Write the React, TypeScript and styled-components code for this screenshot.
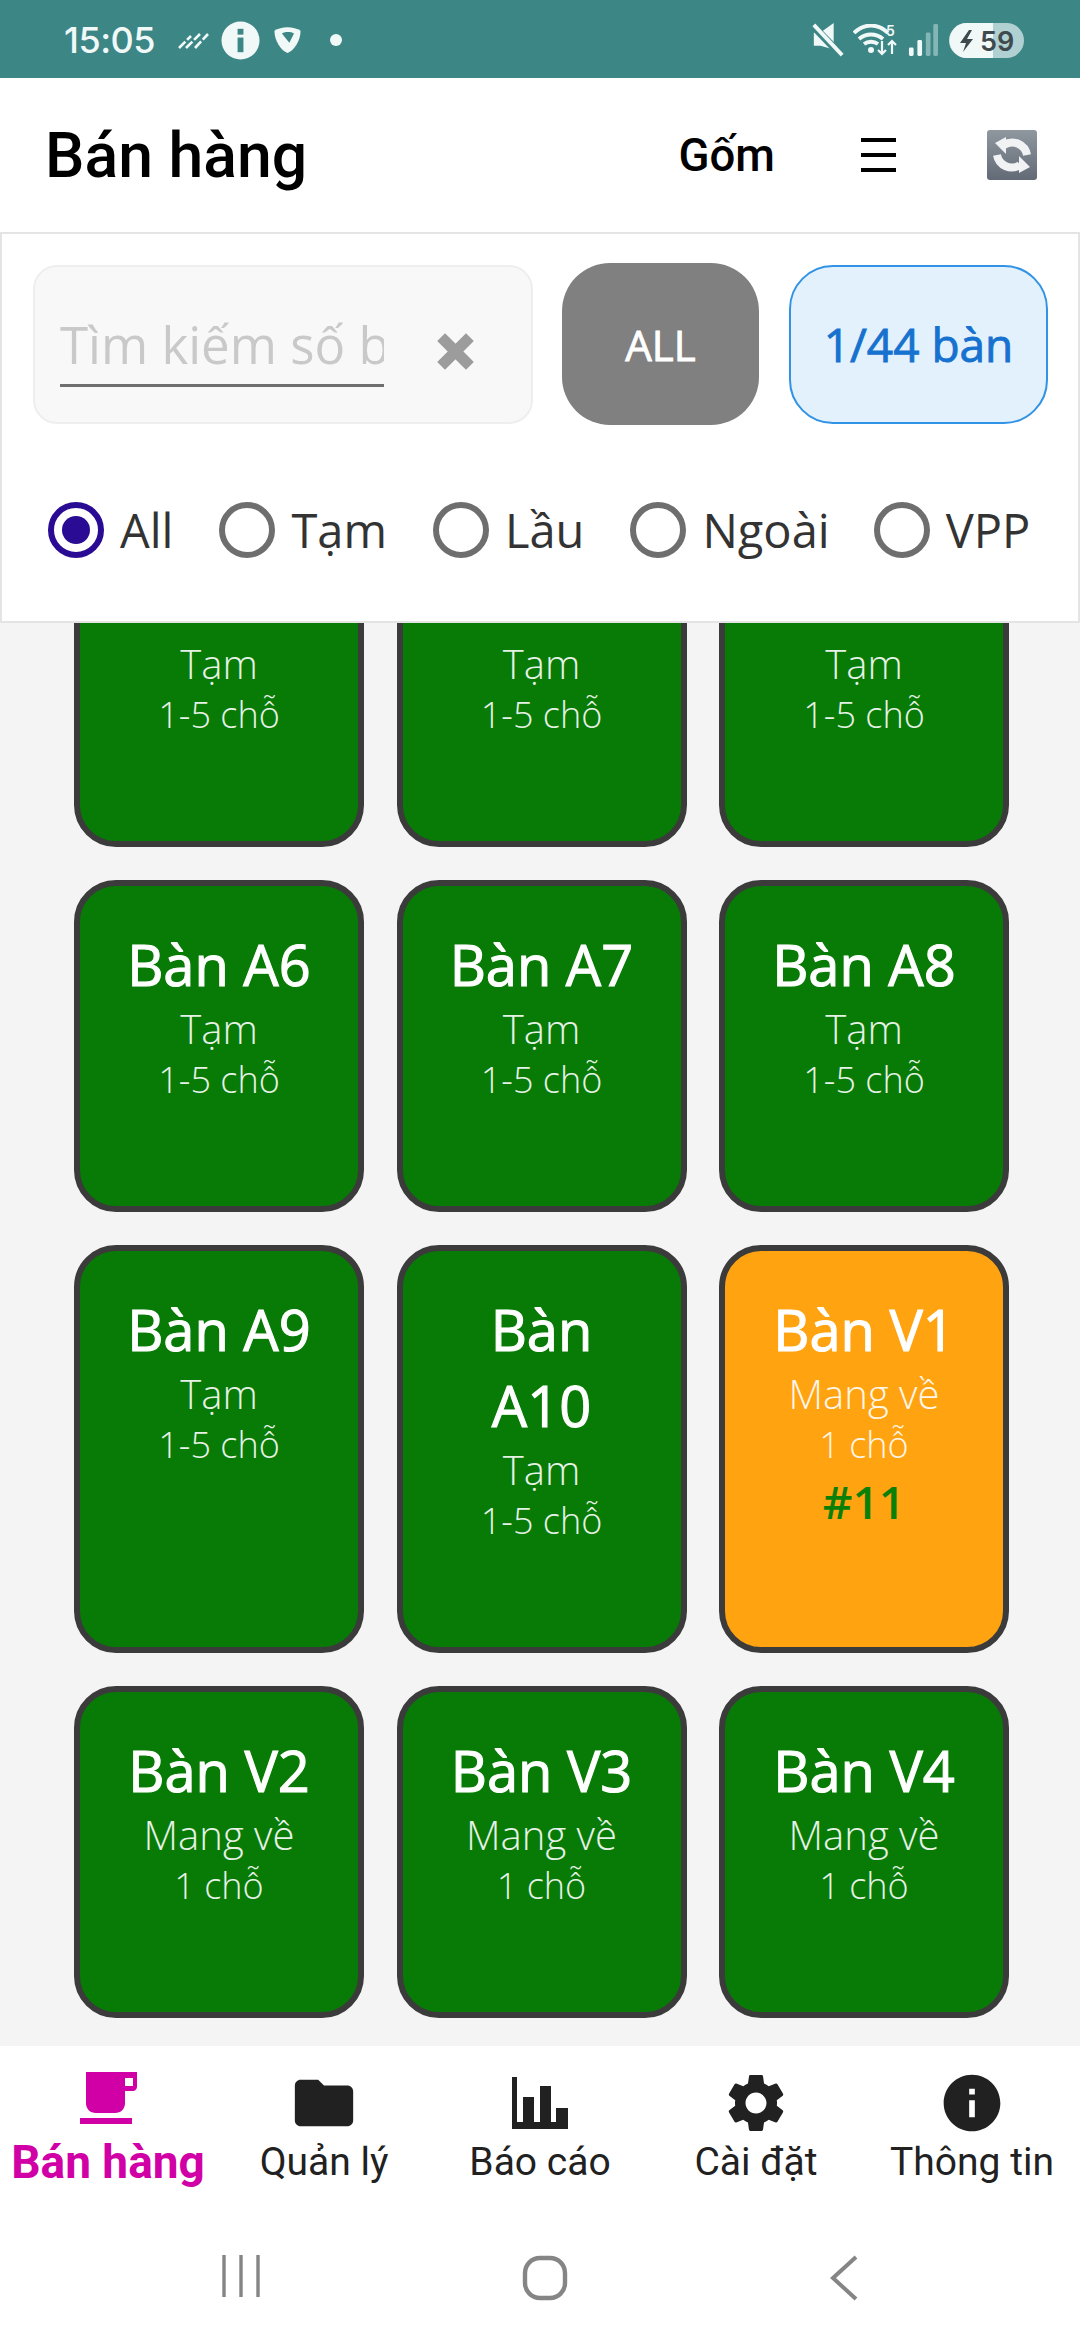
import React from 'react'
import styled, { createGlobalStyle } from 'styled-components'
import { MdInfo, MdSettings, MdFolder } from 'react-icons/md'

const GlobalStyle = createGlobalStyle`
  html, body {
    margin: 0;
    padding: 0;
    background: #fff;
  }
  * {
    box-sizing: border-box;
  }
`

const Page = styled.div`
  width: 1080px;
  height: 2340px;
  display: flex;
  flex-direction: column;
  overflow: hidden;
  font-family: 'Open Sans', sans-serif;
`

const StatusBar = styled.div`
  height: 78px;
  flex: none;
  background: #3c8686;
  display: flex;
  align-items: center;
  justify-content: space-between;
  padding: 2px 56px 0 64px;
  color: #f1f8f8;
`
const StatusGroup = styled.div`
  display: flex;
  align-items: center;
`
const Clock = styled.span`
  font: 500 36px Inter, Roboto, sans-serif;
  letter-spacing: -0.5px;
  margin-right: 23px;
`

const Header = styled.header`
  height: 154px;
  flex: none;
  background: #fff;
  display: flex;
  align-items: center;
  padding: 0 43px 0 45px;
`
const Title = styled.h1`
  margin: 0;
  flex: 1;
  font: 500 62.5px Roboto, sans-serif;
  color: #000;
`
const ShopName = styled.span`
  font: 500 45.5px Roboto, sans-serif;
  color: #000;
  margin-right: 86px;
`
const MenuGlyph = styled.div`
  width: 35px;
  height: 34px;
  border-top: 4px solid #000;
  border-bottom: 4px solid #000;
  margin-right: 91px;
  display: flex;
  align-items: center;
  &::before {
    content: '';
    display: block;
    width: 100%;
    height: 4px;
    background: #000;
  }
`

const FilterPanel = styled.section`
  height: 391px;
  flex: none;
  position: relative;
  z-index: 2;
  background: #fff;
  border: 2px solid #e4e4e4;
  padding: 29px 30px 0 31px;
`
const FilterTop = styled.div`
  display: flex;
  align-items: center;
  height: 162px;
`
const SearchBox = styled.div`
  width: 500px;
  height: 159px;
  background: #f8f8f9;
  border: 2px solid #eeeeef;
  border-radius: 24px;
  display: flex;
  align-items: flex-start;
  padding: 44px 0 0 25px;
  margin-right: 29px;
`
const SearchInput = styled.input`
  width: 324px;
  height: 76px;
  padding: 0 0 6px;
  background: transparent;
  border: 0;
  border-bottom: 3px solid #6f6f6f;
  outline: none;
  font-family: 'Open Sans', sans-serif;
  font-size: 51px;
  &::placeholder {
    color: #c9c9c9;
    opacity: 1;
  }
`
const ClearIcon = styled.svg`
  width: 37px;
  height: 37px;
  margin: 22px 0 0 53px;
`
const AllButton = styled.div`
  width: 197px;
  height: 162px;
  background: #808080;
  border-radius: 48px;
  display: flex;
  align-items: center;
  justify-content: center;
  color: #fff;
  font-size: 42px;
  -webkit-text-stroke: 0.9px #fff;
  margin-right: 30px;
`
const CountBadge = styled.div`
  width: 259px;
  height: 159px;
  background: #e3f1fc;
  border: 2px solid #3193e5;
  border-radius: 44px;
  display: flex;
  align-items: center;
  justify-content: center;
  color: #1671cf;
  font-size: 46px;
  -webkit-text-stroke: 0.9px #1671cf;
`
const RadioRow = styled.div`
  display: flex;
  align-items: center;
  margin-top: 73px;
  padding-left: 15px;
`
const RadioItem = styled.label<{ $gap: number }>`
  display: flex;
  align-items: center;
  margin-right: ${(props) => props.$gap}px;
  font-size: 47px;
  color: #333;
`
const RadioCircle = styled.span<{ $checked?: boolean }>`
  width: 56px;
  height: 56px;
  border-radius: 50%;
  border: 6px solid ${(props) => (props.$checked ? '#2a0c94' : '#6e6e6e')};
  margin-right: 16px;
  display: flex;
  align-items: center;
  justify-content: center;
  &::after {
    content: '';
    width: 28px;
    height: 28px;
    border-radius: 50%;
    background: ${(props) => (props.$checked ? '#2a0c94' : 'transparent')};
  }
`

const TableArea = styled.main`
  flex: 1;
  background: #f4f4f4;
  overflow: hidden;
`
const TableGrid = styled.div`
  display: grid;
  grid-template-columns: repeat(3, 290px);
  column-gap: 32.5px;
  row-gap: 33px;
  padding-left: 74px;
  margin-top: -108px;
`
const TableCard = styled.div<{ $busy?: boolean }>`
  background: ${(props) => (props.$busy ? '#ffa311' : '#087b06')};
  border: 6px solid #3b3b3b;
  border-radius: 42px;
  padding: 40px 36px 101px;
  display: flex;
  flex-direction: column;
  align-items: center;
  text-align: center;
  color: #fff;
`
const TableName = styled.div`
  font-size: 56px;
  line-height: 76px;
  -webkit-text-stroke: 1.1px #fff;
`
const TableAreaLabel = styled.div`
  margin-top: 1px;
  font-size: 40px;
  line-height: 51px;
  font-weight: 300;
  white-space: nowrap;
  opacity: 0.9;
`
const TableSeats = styled.div`
  font-size: 36px;
  line-height: 51px;
  font-weight: 300;
  white-space: nowrap;
  opacity: 0.9;
`
const OrderNumber = styled.div`
  font-size: 46px;
  line-height: 62px;
  font-weight: 600;
  color: #0b8008;
`

const BottomNav = styled.nav`
  height: 180px;
  flex: none;
  background: #fff;
  display: flex;
  justify-content: space-between;
  padding-top: 26px;
`
const NavItem = styled.div`
  width: 216px;
  display: flex;
  flex-direction: column;
  align-items: center;
  color: #212121;
`
const NavIconSlot = styled.div`
  height: 62px;
  display: flex;
  align-items: center;
  justify-content: center;
`
const NavLabel = styled.span<{ $active?: boolean }>`
  margin-top: 3px;
  font-family: Roboto, sans-serif;
  font-size: ${(props) => (props.$active ? 46 : 39)}px;
  font-weight: ${(props) => (props.$active ? 700 : 400)};
  color: ${(props) => (props.$active ? '#d100a6' : '#212121')};
  line-height: 50px;
  white-space: nowrap;
`

const SystemNav = styled.div`
  height: 114px;
  flex: none;
  background: #fff;
  display: flex;
  align-items: flex-start;
  gap: 262px;
  padding: 29px 0 0 222px;
  color: #858585;
`

const CupSvg = styled.svg`
  margin-bottom: 10px;
`

const SyncIcon = () => (
  <svg width="50" height="50" viewBox="0 0 50 50">
    <defs>
      <linearGradient id="syncBg" x1="0" y1="0" x2="0" y2="1">
        <stop offset="0" stopColor="#8f979f" />
        <stop offset="1" stopColor="#626a76" />
      </linearGradient>
    </defs>
    <rect width="50" height="50" rx="3" fill="url(#syncBg)" />
    <path d="M17 15A15 15 0 0 1 40 25" stroke="#f1f2f3" strokeWidth="8" fill="none" />
    <path d="M33 35A15 15 0 0 1 10 25" stroke="#f1f2f3" strokeWidth="8" fill="none" />
    <path d="M8 13l11-6v17z" fill="#f1f2f3" />
    <path d="M43 37l-11 6V26z" fill="#f1f2f3" />
  </svg>
)

const CupIcon = () => (
  <CupSvg width="57" height="52" viewBox="0 0 57 52" fill="#d100a6">
    <path d="M6 0h51v15c0 2-2 4-4 4h-8v12c0 6-4 10-10 10H16C10 41 6 37 6 31z" />
    <path d="M45 6h8v8h-8z" fill="#fff" />
    <rect y="46" width="52" height="6" />
  </CupSvg>
)

const BarsIcon = () => (
  <svg width="56" height="52" viewBox="0 0 56 52" fill="#212121">
    <path d="M0 0h5v45h51v7H0z" />
    <rect x="11" y="20" width="11" height="26" />
    <rect x="28" y="9" width="11" height="37" />
    <rect x="44" y="31" width="12" height="15" />
  </svg>
)

const StatusLeftIcons = () => (
  <>
    <svg width="31" height="18" viewBox="0 0 31 18" stroke="#f1f8f8" strokeWidth="2.6" fill="none" strokeDasharray="9 2.4">
      <path d="M1 17L13 5M8 17L22 3M17 17L30 3" />
    </svg>
    <svg width="39" height="39" viewBox="0 0 40 40" style={{ margin: '0 13px 0 12px' }}>
      <circle cx="20" cy="20" r="19.5" fill="#f1f8f8" />
      <rect x="17" y="8" width="6" height="6" fill="#3c8686" />
      <rect x="17" y="17" width="6" height="15" fill="#3c8686" />
    </svg>
    <svg width="29" height="28" viewBox="0 0 30 30">
      <path d="M1 5C8 0 22 0 29 5c0 11-7 21-14 24C8 26 1 16 1 5z" fill="#f1f8f8" />
      <path d="M9 8c4-2 9-2 13 0l-5 10z" fill="#3c8686" />
    </svg>
    <svg width="12" height="12" viewBox="0 0 12 12" style={{ marginLeft: 28 }}>
      <circle cx="6" cy="6" r="6" fill="#f1f8f8" />
    </svg>
  </>
)

const StatusRightIcons = () => (
  <>
    <svg width="32" height="34" viewBox="0 0 32 36" fill="#f1f8f8">
      <path d="M1 10h7L22 0v28L8 24H1z" />
      <path d="M0 3l30 31" stroke="#3c8686" strokeWidth="8" />
      <path d="M1 2l30 32" stroke="#f1f8f8" strokeWidth="4" />
    </svg>
    <svg width="46" height="32" viewBox="0 0 46 32" fill="none" stroke="#f1f8f8" strokeWidth="3.8" style={{ marginLeft: 9 }}>
      <path d="M1 9c10-10 24-10 34 0M6 15c7-6 17-6 24 0M11 20c4-3 10-3 14 0" />
      <circle cx="18" cy="26" r="3" fill="#f1f8f8" stroke="none" />
      <path d="M29 17v13m-4-4l4 4 4-4M39 30V17m-4 4l4-4 4 4" strokeWidth="2.2" />
      <text x="33" y="12" fontFamily="Inter, sans-serif" fontSize="14" fontWeight="600" fill="#f1f8f8" stroke="none">5</text>
    </svg>
    <svg width="30" height="32" viewBox="0 0 32 34" style={{ marginLeft: 9 }}>
      <rect x="1" y="25" width="5" height="9" rx="1.5" fill="#f1f8f8" />
      <rect x="10" y="17" width="5" height="17" rx="1.5" fill="#f1f8f8" />
      <rect x="19" y="9" width="5" height="25" rx="1.5" fill="#85b6b6" />
      <rect x="27" y="0" width="5" height="34" rx="1.5" fill="#85b6b6" />
    </svg>
    <svg width="75" height="35" viewBox="0 0 75 35" style={{ marginLeft: 11 }}>
      <rect width="75" height="35" rx="17.5" fill="#b0d0d2" />
      <path d="M18 0h26v35H18A17.5 17.5 0 0 1 18 0z" fill="#f1f8f8" />
      <path d="M20 7l-9 13h6l-3 9 10-13h-6l5-9z" fill="#3f4a4f" />
      <text x="31" y="28" fontFamily="Inter, sans-serif" fontSize="27" fontWeight="600" fill="#3f4a4f">59</text>
    </svg>
  </>
)

type Table = { name: string; area: string; seats: string; order?: string }

const tables: Table[] = [
  { name: 'Bàn A3', area: 'Tạm', seats: '1-5 chỗ' },
  { name: 'Bàn A4', area: 'Tạm', seats: '1-5 chỗ' },
  { name: 'Bàn A5', area: 'Tạm', seats: '1-5 chỗ' },
  { name: 'Bàn A6', area: 'Tạm', seats: '1-5 chỗ' },
  { name: 'Bàn A7', area: 'Tạm', seats: '1-5 chỗ' },
  { name: 'Bàn A8', area: 'Tạm', seats: '1-5 chỗ' },
  { name: 'Bàn A9', area: 'Tạm', seats: '1-5 chỗ' },
  { name: 'Bàn A10', area: 'Tạm', seats: '1-5 chỗ' },
  { name: 'Bàn V1', area: 'Mang về', seats: '1 chỗ', order: '#11' },
  { name: 'Bàn V2', area: 'Mang về', seats: '1 chỗ' },
  { name: 'Bàn V3', area: 'Mang về', seats: '1 chỗ' },
  { name: 'Bàn V4', area: 'Mang về', seats: '1 chỗ' }
]

const areas = [
  { label: 'All', gap: 46, checked: true },
  { label: 'Tạm', gap: 46 },
  { label: 'Lầu', gap: 46 },
  { label: 'Ngoài', gap: 44 },
  { label: 'VPP', gap: 0 }
]

const App = () => (
  <Page>
    <GlobalStyle />
    <StatusBar>
      <StatusGroup>
        <Clock>15:05</Clock>
        <StatusLeftIcons />
      </StatusGroup>
      <StatusGroup>
        <StatusRightIcons />
      </StatusGroup>
    </StatusBar>

    <Header>
      <Title>Bán hàng</Title>
      <ShopName>Gốm</ShopName>
      <MenuGlyph />
      <SyncIcon />
    </Header>

    <FilterPanel>
      <FilterTop>
        <SearchBox>
          <SearchInput placeholder="Tìm kiếm số bàn" />
          <ClearIcon viewBox="0 0 37 37">
            <path d="M8 8l21 21M29 8L8 29" stroke="#9c9c9c" strokeWidth="11" strokeLinecap="square" fill="none" />
          </ClearIcon>
        </SearchBox>
        <AllButton>ALL</AllButton>
        <CountBadge>1/44 bàn</CountBadge>
      </FilterTop>
      <RadioRow>
        {areas.map((area) => (
          <RadioItem key={area.label} $gap={area.gap}>
            <RadioCircle $checked={area.checked} />
            {area.label}
          </RadioItem>
        ))}
      </RadioRow>
    </FilterPanel>

    <TableArea>
      <TableGrid>
        {tables.map((table) => (
          <TableCard key={table.name} $busy={Boolean(table.order)}>
            <TableName>{table.name}</TableName>
            <TableAreaLabel>{table.area}</TableAreaLabel>
            <TableSeats>{table.seats}</TableSeats>
            {table.order && <OrderNumber>{table.order}</OrderNumber>}
          </TableCard>
        ))}
      </TableGrid>
    </TableArea>

    <BottomNav>
      <NavItem>
        <NavIconSlot><CupIcon /></NavIconSlot>
        <NavLabel $active>Bán hàng</NavLabel>
      </NavItem>
      <NavItem>
        <NavIconSlot><MdFolder size={70} /></NavIconSlot>
        <NavLabel>Quản lý</NavLabel>
      </NavItem>
      <NavItem>
        <NavIconSlot><BarsIcon /></NavIconSlot>
        <NavLabel>Báo cáo</NavLabel>
      </NavItem>
      <NavItem>
        <NavIconSlot><MdSettings size={70} /></NavIconSlot>
        <NavLabel>Cài đặt</NavLabel>
      </NavItem>
      <NavItem>
        <NavIconSlot><MdInfo size={68} /></NavIconSlot>
        <NavLabel>Thông tin</NavLabel>
      </NavItem>
    </BottomNav>

    <SystemNav>
      <svg width="38" height="42" viewBox="0 0 38 42" stroke="currentColor" strokeWidth="3.4" fill="none">
        <path d="M2 0v42M19 0v42M36 0v42" />
      </svg>
      <svg width="46" height="46" viewBox="0 0 46 46" stroke="currentColor" strokeWidth="4.4" fill="none">
        <rect x="3" y="3" width="40" height="40" rx="15" />
      </svg>
      <svg width="28" height="46" viewBox="0 0 28 46" stroke="currentColor" strokeWidth="4" fill="none">
        <path d="M26 2L3 23l23 21" />
      </svg>
    </SystemNav>
  </Page>
)

export default App
